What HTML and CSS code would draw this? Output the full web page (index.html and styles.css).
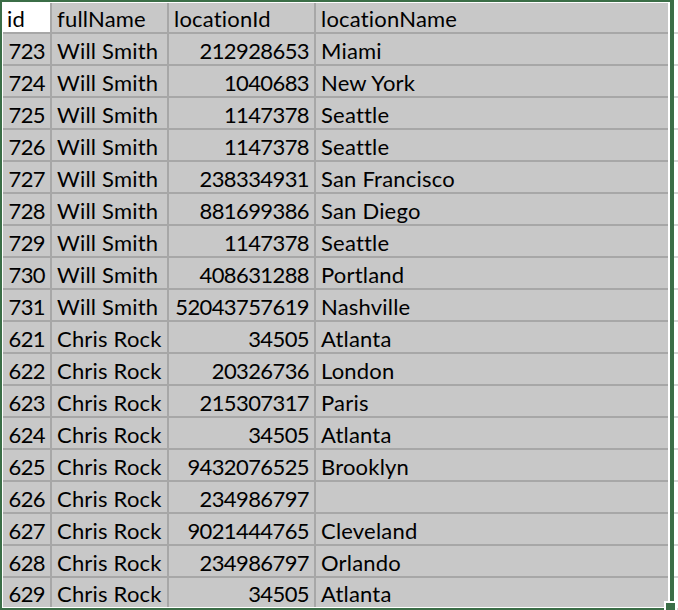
FILE: index.html
```html
<!DOCTYPE html>
<html>
<head>
<meta charset="utf-8">
<link rel="stylesheet" href="styles.css">
</head>
<body>
<div class="sheet">
  <div class="selection">
    <div class="grid">
      <div class="cell active">id</div><div class="cell">fullName</div><div class="cell">locationId</div><div class="cell">locationName</div>
      <div class="cell num">723</div><div class="cell">Will Smith</div><div class="cell num">212928653</div><div class="cell">Miami</div>
      <div class="cell num">724</div><div class="cell">Will Smith</div><div class="cell num">1040683</div><div class="cell">New York</div>
      <div class="cell num">725</div><div class="cell">Will Smith</div><div class="cell num">1147378</div><div class="cell">Seattle</div>
      <div class="cell num">726</div><div class="cell">Will Smith</div><div class="cell num">1147378</div><div class="cell">Seattle</div>
      <div class="cell num">727</div><div class="cell">Will Smith</div><div class="cell num">238334931</div><div class="cell">San Francisco</div>
      <div class="cell num">728</div><div class="cell">Will Smith</div><div class="cell num">881699386</div><div class="cell">San Diego</div>
      <div class="cell num">729</div><div class="cell">Will Smith</div><div class="cell num">1147378</div><div class="cell">Seattle</div>
      <div class="cell num">730</div><div class="cell">Will Smith</div><div class="cell num">408631288</div><div class="cell">Portland</div>
      <div class="cell num">731</div><div class="cell">Will Smith</div><div class="cell num">52043757619</div><div class="cell">Nashville</div>
      <div class="cell num">621</div><div class="cell">Chris Rock</div><div class="cell num">34505</div><div class="cell">Atlanta</div>
      <div class="cell num">622</div><div class="cell">Chris Rock</div><div class="cell num">20326736</div><div class="cell">London</div>
      <div class="cell num">623</div><div class="cell">Chris Rock</div><div class="cell num">215307317</div><div class="cell">Paris</div>
      <div class="cell num">624</div><div class="cell">Chris Rock</div><div class="cell num">34505</div><div class="cell">Atlanta</div>
      <div class="cell num">625</div><div class="cell">Chris Rock</div><div class="cell num">9432076525</div><div class="cell">Brooklyn</div>
      <div class="cell num">626</div><div class="cell">Chris Rock</div><div class="cell num">234986797</div><div class="cell"></div>
      <div class="cell num">627</div><div class="cell">Chris Rock</div><div class="cell num">9021444765</div><div class="cell">Cleveland</div>
      <div class="cell num">628</div><div class="cell">Chris Rock</div><div class="cell num">234986797</div><div class="cell">Orlando</div>
      <div class="cell num">629</div><div class="cell">Chris Rock</div><div class="cell num">34505</div><div class="cell">Atlanta</div>
    </div>
  </div>
  <div class="outside"></div>
  <div class="handle"></div>
</div>
</body>
</html>
```
FILE: styles.css
```css
html, body {
  margin: 0;
  padding: 0;
  background: #ffffff;
}

.sheet {
  position: relative;
  display: flex;
  width: 678px;
  height: 610px;
  overflow: hidden;
}

.selection {
  box-sizing: border-box;
  width: 674px;
  height: 610px;
  flex: none;
  border: 2px solid #3b6e47;
  border-right-width: 4px;
  background: #ffffff;
  padding: 1px 2px 1px 1px;
}

.grid {
  display: grid;
  grid-template-columns: 47px 115px 145px 352px;
  grid-template-rows: 29px repeat(17, 30px) 29px;
  gap: 2px;
  background: #a7a7a7;
  height: 604px;
}

.cell {
  display: flex;
  align-items: center;
  box-sizing: border-box;
  padding: 2px 5px 0 5px;
  background: #c8c8c8;
  color: #000000;
  font-family: Lato, "Liberation Sans", sans-serif;
  font-size: 22px;
  letter-spacing: 0.2px;
  white-space: nowrap;
  overflow: hidden;
}

.cell.num {
  justify-content: flex-end;
  letter-spacing: -0.6px;
  padding-right: 5px;
}

.cell.active {
  background: #ffffff;
  padding-left: 4px;
}

.outside {
  flex: 1;
  height: 610px;
  background: repeating-linear-gradient(to bottom, transparent 0 30px, #d6d6d6 30px 32px);
  background-position: 0 2px;
}

.handle {
  position: absolute;
  left: 664px;
  top: 601px;
  width: 9px;
  height: 7px;
  border: 2px solid #ffffff;
  background: #3b6e47;
}
```
